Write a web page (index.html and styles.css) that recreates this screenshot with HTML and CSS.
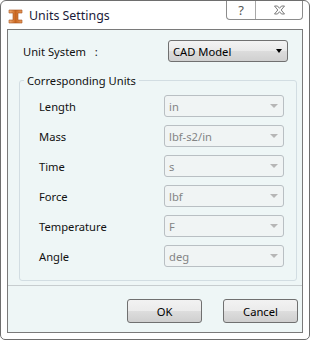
FILE: index.html
```html
<!DOCTYPE html>
<html lang="en">
<head>
    <meta charset="UTF-8">
    <title>Units Settings</title>
    <link rel="stylesheet" href="styles.css">
</head>
<body>
    <!-- Dialog window -->
    <div class="window">
        <div class="titlebar">
            <svg class="app-icon" width="15" height="15" viewBox="0 0 15 15">
                <defs>
                    <linearGradient id="beam" x1="0" y1="0" x2="1" y2="0">
                        <stop offset="0" stop-color="#f3b27a"/>
                        <stop offset="0.5" stop-color="#c8651f"/>
                        <stop offset="1" stop-color="#e79a5c"/>
                    </linearGradient>
                </defs>
                <path d="M1 1h13v3h-4v7h4v3H1v-3h4V4H1z" fill="url(#beam)" stroke="#a4521c" stroke-width="0.6"/>
            </svg>
            <span class="title">Units Settings</span>
            <div class="caption-buttons">
                <div class="cap-btn help">?</div>
                <div class="cap-btn close">
                    <svg width="13" height="10" viewBox="0 0 13 10">
                        <path d="M1.5 1h3l2 2.3 2-2.3h3l-3.3 4 3.3 4h-3l-2-2.3-2 2.3h-3l3.3-4z" fill="#fff" stroke="#6d6d6d" stroke-width="0.9"/>
                    </svg>
                </div>
            </div>
        </div>

        <div class="client">
            <div class="system-row">
                <span class="system-label">Unit System &nbsp; :</span>
                <div class="combo active">
                    <span>CAD Model</span>
                    <span class="arrow"></span>
                </div>
            </div>

            <!-- Unit list -->
            <fieldset class="group">
                <legend>Corresponding Units</legend>
                <div class="unit-row">
                    <span class="unit-label">Length</span>
                    <div class="combo disabled"><span>in</span><span class="arrow"></span></div>
                </div>
                <div class="unit-row">
                    <span class="unit-label">Mass</span>
                    <div class="combo disabled"><span>lbf-s2/in</span><span class="arrow"></span></div>
                </div>
                <div class="unit-row">
                    <span class="unit-label">Time</span>
                    <div class="combo disabled"><span>s</span><span class="arrow"></span></div>
                </div>
                <div class="unit-row">
                    <span class="unit-label">Force</span>
                    <div class="combo disabled"><span>lbf</span><span class="arrow"></span></div>
                </div>
                <div class="unit-row">
                    <span class="unit-label">Temperature</span>
                    <div class="combo disabled"><span>F</span><span class="arrow"></span></div>
                </div>
                <div class="unit-row">
                    <span class="unit-label">Angle</span>
                    <div class="combo disabled"><span>deg</span><span class="arrow"></span></div>
                </div>
            </fieldset>

            <div class="separator"></div>

            <div class="buttons">
                <button class="btn">OK</button>
                <button class="btn">Cancel</button>
            </div>
        </div>
    </div>
</body>
</html>
```

FILE: styles.css
```css
/* Page */
body {
    margin: 0;
    font-family: "Noto Sans", "Open Sans", sans-serif;
    font-size: 11.2px;
    background: #ffffff;
}

/* Window frame */
.window {
    box-sizing: border-box;
    width: 310px;
    height: 340px;
    border: 1px solid #6e6e6e;
    border-radius: 6px 6px 5px 5px;
    background: #ffffff;
    padding: 0 6px 6px 6px;
    display: flex;
    flex-direction: column;
}

/* Title bar */
.titlebar {
    height: 28px;
    display: flex;
    align-items: flex-start;
}

.app-icon {
    margin: 8px 0 0 1px;
}

.title {
    margin: 6px 0 0 6px;
    font-size: 12.4px;
    color: #1b1b3a;
}

.caption-buttons {
    margin-left: auto;
    display: flex;
    border: 1px solid #8c8c8c;
    border-top: none;
    border-radius: 0 0 4px 4px;
    height: 18px;
}

.cap-btn {
    display: flex;
    align-items: center;
    justify-content: center;
}

.help {
    width: 28px;
    border-right: 1px solid #a8a8a8;
    color: #555;
    font-size: 13px;
}

.close {
    width: 46px;
}

/* Client area */
.client {
    flex: 1;
    border: 1px solid #7a7a7a;
    background: #eef6f6;
    display: flex;
    flex-direction: column;
    padding: 0 5px 0 11px;
}

.system-row {
    display: flex;
    align-items: center;
    margin-top: 10px;
    height: 22px;
}

.system-label {
    width: 145px;
    padding-left: 4px;
    color: #111;
}

/* Combo boxes */
.combo {
    box-sizing: border-box;
    width: 120px;
    height: 22px;
    border-radius: 3px;
    display: flex;
    align-items: center;
    justify-content: space-between;
    padding: 0 5px 0 4px;
}

.combo.active {
    border: 1px solid #707070;
    background: linear-gradient(#f3f3f3, #e9e9e9 50%, #dcdcdc 51%, #d0d0d0);
    color: #000;
}

.combo.active .arrow {
    border-left: 3.5px solid transparent;
    border-right: 3.5px solid transparent;
    border-top: 4px solid #000;
}

.combo.disabled {
    border: 1px solid #b9bfc3;
    background: #f0f4f4;
    color: #848484;
}

.combo.disabled .arrow {
    border-left: 4px solid transparent;
    border-right: 4px solid transparent;
    border-top: 4px solid #b6b6b6;
}

/* Group box */
.group {
    margin: 11px 0 0 0;
    padding: 7px 0 0 0;
    width: 278px;
    box-sizing: border-box;
    height: 208px;
    border: 1px solid #d2dde2;
    border-radius: 3px;
}

.group legend {
    padding: 0 3px;
    margin-left: 4px;
    color: #111;
}

.unit-row {
    display: flex;
    align-items: center;
    height: 22px;
    margin-bottom: 8px;
    padding-left: 19px;
}

.unit-label {
    width: 125px;
    color: #111;
}

/* Bottom area */
.separator {
    margin: 4px -5px 0 -11px;
    border-top: 1px solid #c7cdcf;
}

.buttons {
    display: flex;
    justify-content: flex-end;
    gap: 21px;
    margin: 13px -1px 0 0;
}

.btn {
    width: 75px;
    height: 24px;
    font-family: inherit;
    font-size: 11.2px;
    color: #000;
    border: 1px solid #707070;
    border-radius: 3px;
    background: linear-gradient(#f2f2f2, #ebebeb 50%, #dddddd 51%, #cfcfcf);
}
```
